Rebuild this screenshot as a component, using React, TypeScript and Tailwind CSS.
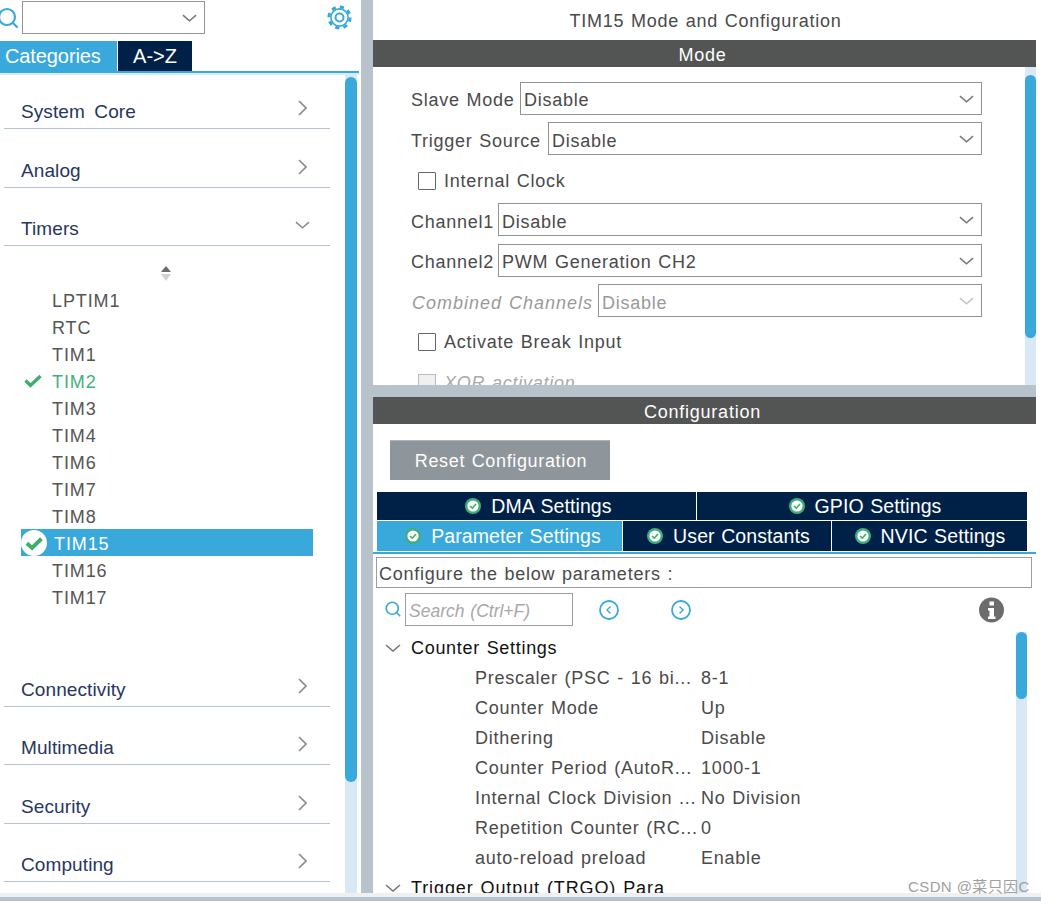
import React from 'react'
import { Search } from 'lucide-react'

const Chevron = ({ dir = 'down', className = '' }: { dir?: 'down' | 'right' | 'left'; className?: string }) => {
  const pts = dir === 'down' ? '1,1 8,7 15,1' : dir === 'right' ? '1,1 8,8 1,15' : '8,1 1,8 8,15'
  const box = dir === 'down' ? '0 0 16 8' : '0 0 9 16'
  return (
    <svg viewBox={box} className={className} fill="none" stroke="currentColor" strokeWidth="1.6">
      <polyline points={pts} />
    </svg>
  )
}

const Gear = () => (
  <svg width="25" height="25" viewBox="0 0 25 25" className="ml-[122px] mt-[5px]" fill="none" stroke="#39a9dc">
    <circle cx="12.5" cy="12.5" r="10.6" strokeWidth="3" strokeDasharray="4.2 4.12" />
    <circle cx="12.5" cy="12.5" r="8.6" strokeWidth="1.6" />
    <circle cx="12.5" cy="12.5" r="4" strokeWidth="2" />
  </svg>
)

const CheckBadge = ({ size = 16 }: { size?: number }) => (
  <svg width={size} height={size} viewBox="0 0 16 16" className="shrink-0">
    <circle cx="8" cy="8" r="8" fill="#ffffff" />
    <path d="M3.6 8.2 L6.8 11 L12.6 5.4" fill="none" stroke="#3fae6a" strokeWidth="2.4" />
  </svg>
)

const TabBadge = () => (
  <svg width="16" height="16" viewBox="0 0 16 16" className="shrink-0">
    <circle cx="8" cy="8" r="8" fill="#3fae7a" />
    <circle cx="8" cy="8" r="5.6" fill="#ffffff" />
    <path d="M5 8 L7.3 10.2 L11 6" fill="none" stroke="#3fae6a" strokeWidth="1.6" />
  </svg>
)

const topCats = [
  { name: 'System Core', h: 'h-[54px]', open: false },
  { name: 'Analog', h: 'h-[59px]', open: false },
  { name: 'Timers', h: 'h-[58px]', open: true },
]
const bottomCats = [
  { name: 'Connectivity', h: 'h-[59px]' },
  { name: 'Multimedia', h: 'h-[58px]' },
  { name: 'Security', h: 'h-[59px]' },
  { name: 'Computing', h: 'h-[58px]' },
]
const timers = ['LPTIM1', 'RTC', 'TIM1', 'TIM2', 'TIM3', 'TIM4', 'TIM6', 'TIM7', 'TIM8', 'TIM15', 'TIM16', 'TIM17']
const params = [
  ['Prescaler (PSC - 16 bi...', '8-1'],
  ['Counter Mode', 'Up'],
  ['Dithering', 'Disable'],
  ['Counter Period (AutoR...', '1000-1'],
  ['Internal Clock Division ...', 'No Division'],
  ['Repetition Counter (RC...', '0'],
  ['auto-reload preload', 'Enable'],
]

const CatRow = ({ name, h, open }: { name: string; h: string; open?: boolean }) => (
  <div className={`${h} ml-1 w-[326px] border-b border-[#b5c3d6] flex items-end justify-between pl-[17px] pr-[23px] pb-[4px] text-[#27365f] text-[19px] leading-6 tracking-[0.1px] [word-spacing:4px]`}>
    <span>{name}</span>
    {open ? (
      <Chevron dir="down" className="w-[15px] h-[8px] mb-[12px] -mr-[3px] text-[#8a8a8a]" />
    ) : (
      <Chevron dir="right" className="w-[9px] h-[16px] mb-[8px] text-[#8a8a8a]" />
    )}
  </div>
)

const SelectBox = ({ value, disabled, w, low }: { value: string; disabled?: boolean; w: string; low?: boolean }) => (
  <div className={`${w} h-[33px] border border-[#8f9498] flex items-center justify-between pl-[3px] pr-[7px] ${disabled ? 'text-[#9a9a9a]' : 'text-[#4a4a4a]'}`}>
    <span className={low ? 'pt-[4px]' : 'pt-[2px]'}>{value}</span>
    <Chevron dir="down" className={`w-[15px] h-[8px] ${disabled ? 'text-[#c4c4c4]' : 'text-[#777]'}`} />
  </div>
)

const CheckRow = ({ label, h }: { label: string; h: string }) => (
  <div className={`${h} flex items-center pl-[45px] gap-2 text-[#4a4a4a]`}>
    <span className="w-[18px] h-[18px] border border-[#666] rounded-[1px]" />
    <span>{label}</span>
  </div>
)

export default function App() {
  return (
    <div className="w-[1041px] h-[903px] overflow-hidden bg-white relative font-['Liberation_Sans',sans-serif]">
      <div className="flex h-[893px]">
        {/* left panel */}
        <div className="w-[361px] shrink-0 flex flex-col">
          <div className="h-[41px] flex items-start">
            <Search className="w-[24px] h-[24px] mt-[6px] -ml-[4px] text-[#39a9dc]" strokeWidth={2.2} />
            <div className="ml-[2px] mt-[1px] w-[183px] h-[33px] border border-[#909498] flex items-center justify-end pr-[7px]">
              <Chevron dir="down" className="w-[15px] h-[8px] text-[#777]" />
            </div>
            <Gear />
          </div>
          <div className="h-[30px] flex text-white text-[20px] leading-[30px]">
            <div className="w-[117px] bg-[#39a9dc] pl-[5px] tracking-[-0.1px]">Categories</div>
            <div className="ml-px w-[74px] bg-[#002147] text-center">A-&gt;Z</div>
          </div>
          <div className="h-[4px] border-t-2 border-[#39a9dc] w-[359px] bg-[#d8ecf7]" />
          <div className="flex-1 flex min-h-0">
            <div className="w-[345px] shrink-0 flex flex-col">
              {topCats.map((c) => (
                <CatRow key={c.name} name={c.name} h={c.h} open={c.open} />
              ))}
              <div className="h-[40px] flex justify-center items-center">
                <svg width="12" height="18" viewBox="0 0 12 18" className="mt-[16px] -ml-[14px]">
                  <path d="M6 1 L11 7 H1 Z" fill="#6b6b6b" />
                  <path d="M1 9 H11 L6 16 Z" fill="#d2d2d2" />
                </svg>
              </div>
              <div className="h-[362px] text-[18px] text-[#555] tracking-[0.9px]">
                {timers.map((t) => (
                  <div
                    key={t}
                    className={`ml-[21px] w-[292px] h-[27px] flex items-center ${t === 'TIM15' ? 'bg-[#39a9dc] text-white' : t === 'TIM2' ? 'text-[#3fb27a]' : ''}`}
                  >
                    <span className={`${t === 'TIM15' ? 'w-[33px]' : 'w-[31px]'} shrink-0 flex justify-start ${t === 'TIM2' ? 'pl-[3px]' : ''}`}>
                      {t === 'TIM2' && (
                        <svg width="18" height="14" viewBox="0 0 18 14" className="mt-[1px]">
                          <path d="M1.5 6.5 L6.5 11.5 L16.5 2" fill="none" stroke="#3fae6a" strokeWidth="3.4" />
                        </svg>
                      )}
                      {t === 'TIM15' && <CheckBadge size={26} />}
                    </span>
                    <span className="pt-[4px]">{t}</span>
                  </div>
                ))}
              </div>
              {bottomCats.map((c) => (
                <CatRow key={c.name} name={c.name} h={c.h} />
              ))}
            </div>
            <div className="w-3 bg-[#d9e8f5]">
              <div className="h-[705px] mt-[2px] bg-[#39a9dc] rounded-full" />
            </div>
          </div>
        </div>

        {/* splitter */}
        <div className="w-3 shrink-0 bg-[#b7c2ca]" />

        {/* right panel */}
        <div className="w-[663px] shrink-0 flex flex-col text-[18px] leading-6 tracking-[0.75px] [word-spacing:1px]">
          <div className="h-[40px] flex items-center justify-center pl-[2px] pt-[2px] text-[#4a4a4a]">TIM15 Mode and Configuration</div>
          <div className="h-[27px] bg-[#535554] text-white flex items-center justify-center pr-[4px] pt-[2px]">Mode</div>
          <div className="h-[318px] flex overflow-hidden">
            <div className="flex-1 min-w-0 pl-[38px] pt-[15px]">
              <div className="flex items-center mb-[7px] w-[571px] justify-between text-[#4a4a4a]">
                <span className="pt-[2px]">Slave Mode</span>
                <SelectBox value="Disable" w="w-[462px]" />
              </div>
              <div className="flex items-center w-[571px] justify-between text-[#4a4a4a]">
                <span className="pt-[4px]">Trigger Source</span>
                <SelectBox value="Disable" low w="w-[434px]" />
              </div>
              <div className="-ml-[38px] mt-[6px] mb-[2px]"><CheckRow label="Internal Clock" h="h-[40px]" /></div>
              <div className="flex items-center mb-[8px] w-[571px] justify-between text-[#4a4a4a]">
                <span className="pt-[4px]">Channel1</span>
                <SelectBox value="Disable" low w="w-[484px]" />
              </div>
              <div className="flex items-center mb-[7px] w-[571px] justify-between text-[#4a4a4a]">
                <span className="pt-[2px]">Channel2</span>
                <SelectBox value="PWM Generation CH2" w="w-[484px]" />
              </div>
              <div className="flex items-center w-[571px] justify-between text-[#9a9a9a]">
                <span className="italic pt-[4px] pl-[1px] tracking-[1px] whitespace-nowrap">Combined Channels</span>
                <SelectBox value="Disable" disabled low w="w-[384px]" />
              </div>
              <div className="-ml-[38px] mt-[8px]"><CheckRow label="Activate Break Input" h="h-[34px]" /></div>
              <div className="-ml-[38px] mt-[7px] flex items-center pl-[45px] gap-2 text-[#aaa] italic h-[34px]">
                <span className="w-[18px] h-[18px] border border-[#bbb] bg-[#eef0f2]" />
                <span>XOR activation</span>
              </div>
            </div>
            <div className="w-[11px] bg-[#d9e8f5]">
              <div className="h-[263px] mt-[8px] bg-[#39a9dc] rounded-full" />
            </div>
          </div>
          <div className="h-[12px] bg-[#b7c2ca] shrink-0" />
          <div className="h-[27px] bg-[#535554] text-white flex items-center justify-center pr-[4px] pt-[2px]">Configuration</div>
          <div className="pl-[17px] pt-[16px]">
            <div className="w-[220px] h-[40px] bg-[#8e959b] text-white flex items-center justify-center border-t border-[#aeb3b7] tracking-[0.65px] pl-[2px]">Reset Configuration</div>
          </div>
          <div className="mt-[12px] ml-[4px] w-[650px] text-white text-[19.5px] tracking-[0.1px]">
            <div className="h-[28px] flex bg-[#002147]">
              <div className="w-[320px] flex items-center justify-center gap-[10px] border-r border-white pl-[4px]">
                <TabBadge /> DMA Settings
              </div>
              <div className="flex-1 flex items-center justify-center gap-[10px] pl-[6px]">
                <TabBadge /> GPIO Settings
              </div>
            </div>
            <div className="h-[31px] flex border-t border-white">
              <div className="w-[245px] bg-[#39a9dc] flex items-center justify-center gap-[10px] pl-[7px]">
                <TabBadge /> Parameter Settings
              </div>
              <div className="ml-px w-[208px] bg-[#002147] flex items-center justify-center gap-[10px] pl-[3px]">
                <TabBadge /> User Constants
              </div>
              <div className="ml-px flex-1 bg-[#002147] flex items-center justify-center gap-[10px] pl-[1px]">
                <TabBadge /> NVIC Settings
              </div>
            </div>
          </div>
          <div className="h-[2px] mt-[1px] bg-[#39a9dc]" />
          <div className="ml-[3px] mt-[3px] w-[656px] h-[31px] border border-[#9a9ea2] flex items-center pl-[2px] pt-[2px] text-[#4a4a4a]">
            Configure the below parameters :
          </div>
          <div className="h-[42px] flex items-center pl-[11px]">
            <Search className="w-[18px] h-[18px] text-[#39a9dc]" strokeWidth={2.2} />
            <div className="ml-[3px] w-[168px] h-[33px] border border-[#9a9ea2] flex items-center pl-[3px] pt-[3px] italic text-[17.5px] tracking-normal text-[#a8a8a8]">Search (Ctrl+F)</div>
            <svg width="20" height="20" viewBox="0 0 20 20" className="ml-[26px] mt-[2px] text-[#39a9dc]" fill="none" stroke="currentColor">
              <circle cx="10" cy="10" r="9" strokeWidth="1.8" />
              <polyline points="11.5,6.5 8,10 11.5,13.5" strokeWidth="1.4" />
            </svg>
            <svg width="20" height="20" viewBox="0 0 20 20" className="ml-[52px] mt-[2px] text-[#39a9dc]" fill="none" stroke="currentColor">
              <circle cx="10" cy="10" r="9" strokeWidth="1.8" />
              <polyline points="8.5,6.5 12,10 8.5,13.5" strokeWidth="1.4" />
            </svg>
            <svg width="25" height="26" viewBox="0 0 25 26" className="ml-[288px] mt-[2px]">
              <circle cx="12.5" cy="13" r="12.5" fill="#6c6c6c" />
              <rect x="10.5" y="4.5" width="4.5" height="4" fill="#fff" />
              <path d="M9 11 H15 V19.5 H16.5 V22 H9 V19.5 H10.5 V13.5 H9 Z" fill="#fff" />
            </svg>
          </div>
          <div className="flex-1 min-h-0 flex overflow-hidden">
            <div className="w-[643px] shrink-0 pt-[3px]">
              <div className="h-[30px] flex items-center pl-[12px] gap-[10px] text-[#111]">
                <Chevron dir="down" className="w-[16px] h-[8px] text-[#777]" />
                <span className="tracking-[0.7px]">Counter Settings</span>
              </div>
              {params.map(([k, v]) => (
                <div key={k} className="h-[30px] flex items-center pl-[102px] text-[#4a4a4a]">
                  <span className="w-[226px] shrink-0 whitespace-nowrap overflow-hidden">{k}</span>
                  <span>{v}</span>
                </div>
              ))}
              <div className="h-[30px] flex items-center pl-[12px] gap-[10px] text-[#111]">
                <Chevron dir="down" className="w-[16px] h-[8px] text-[#777]" />
                <span className="tracking-[0.9px]">Trigger Output (TRGO) Para</span>
              </div>
            </div>
            <div className="w-[11px] bg-[#d9e8f5] mt-[2px]">
              <div className="h-[67px] bg-[#39a9dc] rounded-full" />
            </div>
          </div>
        </div>
      </div>

      <div className="h-[4px] bg-[#eef0f2]" />
      <div className="h-[4px] bg-[#b7c2ca]" />

      {/* watermark */}
      <div className="absolute left-[908px] top-[877px] text-[15px] leading-5 text-[#a0a0a0] tracking-[0.4px] font-['Liberation_Sans','Noto_Sans_CJK_SC',sans-serif]">
        CSDN @菜只因C
      </div>
    </div>
  )
}
